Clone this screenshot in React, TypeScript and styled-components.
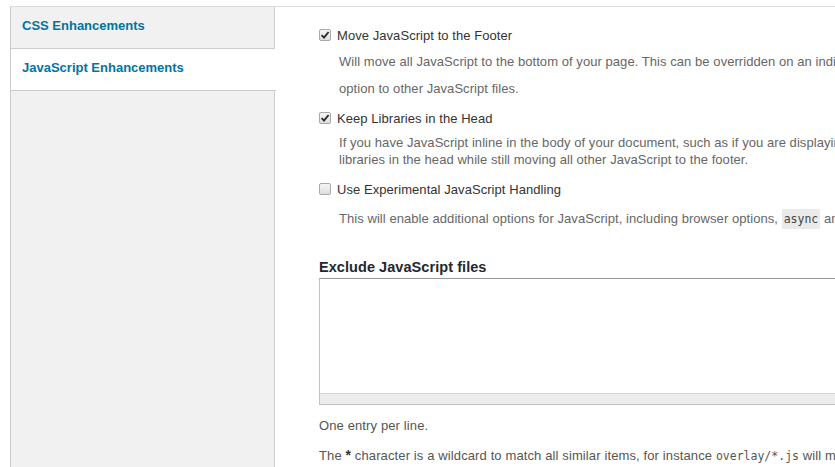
import React from "react";
import styled, { createGlobalStyle } from "styled-components";

const GlobalStyle = createGlobalStyle`
  html, body {
    margin: 0;
    padding: 0;
    background: #fff;
    overflow: hidden;
  }
  body {
    font-family: "Liberation Sans", Arial, sans-serif;
    font-size: 13px;
    color: #444;
  }
`;

const Page = styled.div`
  display: flex;
  margin: 6px 0 0 10px;
  border-top: 1px solid #dcdcdc;
  min-height: 460px;
`;

const Sidebar = styled.div`
  flex: 0 0 263px;
  background: #f1f1f1;
  border-left: 1px solid #ccc;
  border-right: 1px solid #ccc;
`;

const NavItem = styled.div<{ $active?: boolean }>`
  height: 41px;
  line-height: 37px;
  padding-left: 11px;
  font-weight: bold;
  font-size: 13px;
  color: #0074a2;
  border-bottom: 1px solid #ccc;
  background: ${(p) => (p.$active ? "#fff" : "transparent")};
  margin-right: ${(p) => (p.$active ? "-2px" : "0")};
  position: relative;
`;

const Content = styled.div`
  flex: 1;
  padding: 18px 0 0 44px;
  min-width: 0;
  letter-spacing: 0.06px;
`;

const OptionBlock = styled.div<{ $gap: number }>`
  margin-top: ${(p) => p.$gap}px;
`;

const OptionRow = styled.div`
  display: flex;
  align-items: center;
  height: 20px;
`;

const Box = styled.span`
  box-sizing: border-box;
  width: 12px;
  height: 12px;
  border: 1px solid #a9a9a9;
  border-radius: 2px;
  background: linear-gradient(#f6f6f6, #dedede);
  display: flex;
  align-items: center;
  justify-content: center;
  margin-right: 6px;
`;

const Label = styled.span`
  color: #333;
  font-size: 13px;
`;

const Description = styled.div<{ $lh: number; $gap: number }>`
  padding-left: 20px;
  margin-top: ${(p) => p.$gap}px;
  line-height: ${(p) => p.$lh}px;
  color: #666;
  white-space: nowrap;
`;

const Line = styled.div``;

const Code = styled.code`
  font-family: "DejaVu Sans Mono", "Liberation Mono", monospace;
  font-size: 11.5px;
  line-height: 1;
  letter-spacing: 0;
  background: #eaeaea;
  color: #444;
  padding: 3px 2px;
`;

const Heading = styled.h3`
  margin: 30px 0 0;
  font-size: 14.5px;
  line-height: 20px;
  font-weight: bold;
  color: #23282d;
`;

const TextBox = styled.div`
  margin-top: 1px;
  border: 1px solid #c4c4c4;
  border-top-color: #999;
  border-right: none;
  box-shadow: 0 0 2px rgba(0, 0, 0, 0.06);
`;

const TextArea = styled.div`
  height: 114px;
  background: #fff;
  border-bottom: 1px solid #d8d8d8;
`;

const ScrollTrack = styled.div`
  height: 10px;
  background: #ececec;
`;

const Note = styled.p<{ $gap?: number }>`
  margin: ${(p) => p.$gap ?? 12}px 0 0;
  line-height: 17px;
  color: #555;
  white-space: nowrap;
  letter-spacing: 0.12px;
`;

const Star = styled.strong`
  color: #333;
  font-size: 14px;
  line-height: 1;
`;

const Mono = styled.code`
  font-family: "DejaVu Sans Mono", "Liberation Mono", monospace;
  font-size: 11.5px;
  line-height: 1;
  letter-spacing: 0;
  color: #555;
`;

type Option = {
  label: string;
  checked: boolean;
  gap: number;
  descGap: number;
  lineHeight: number;
  lines: React.ReactNode[];
};

const options: Option[] = [
  {
    label: "Move JavaScript to the Footer",
    checked: true,
    gap: 0,
    descGap: 3,
    lineHeight: 27,
    lines: [
      "Will move all JavaScript to the bottom of your page. This can be overridden on an individual basis by applying the same",
      "option to other JavaScript files.",
    ],
  },
  {
    label: "Keep Libraries in the Head",
    checked: true,
    gap: 6,
    descGap: 6,
    lineHeight: 17,
    lines: [
      "If you have JavaScript inline in the body of your document, such as if you are displaying ads, you may need to keep jQuery and other",
      "libraries in the head while still moving all other JavaScript to the footer.",
    ],
  },
  {
    label: "Use Experimental JavaScript Handling",
    checked: false,
    gap: 11,
    descGap: 11,
    lineHeight: 17,
    lines: [
      <>
        This will enable additional options for JavaScript, including browser options, <Code>async</Code> and{" "}
        <Code>defer</Code>.
      </>,
    ],
  },
];

const CheckIcon = () => (
  <svg width="10" height="10" viewBox="0 0 10 10">
    <path d="M1.6 5.2 L4 7.6 L8.6 2" fill="none" stroke="#2b2b2b" strokeWidth="1.9" />
  </svg>
);

const App = () => {
  return (
    <>
      <GlobalStyle />
      <Page>
        <Sidebar>
          <NavItem>CSS Enhancements</NavItem>
          <NavItem $active>JavaScript Enhancements</NavItem>
        </Sidebar>
        <Content>
          {options.map((opt) => (
            <OptionBlock key={opt.label} $gap={opt.gap}>
              <OptionRow>
                <Box>{opt.checked && <CheckIcon />}</Box>
                <Label>{opt.label}</Label>
              </OptionRow>
              <Description $lh={opt.lineHeight} $gap={opt.descGap}>
                {opt.lines.map((line, j) => (
                  <Line key={j}>{line}</Line>
                ))}
              </Description>
            </OptionBlock>
          ))}
          <Heading>Exclude JavaScript files</Heading>
          <TextBox>
            <TextArea />
            <ScrollTrack />
          </TextBox>
          <Note>One entry per line.</Note>
          <Note $gap={13}>
            The <Star>*</Star> character is a wildcard to match all similar items, for instance{" "}
            <Mono>overlay/*.js</Mono> will match all JavaScript files in the overlay folder.
          </Note>
        </Content>
      </Page>
    </>
  );
};

export default App;
